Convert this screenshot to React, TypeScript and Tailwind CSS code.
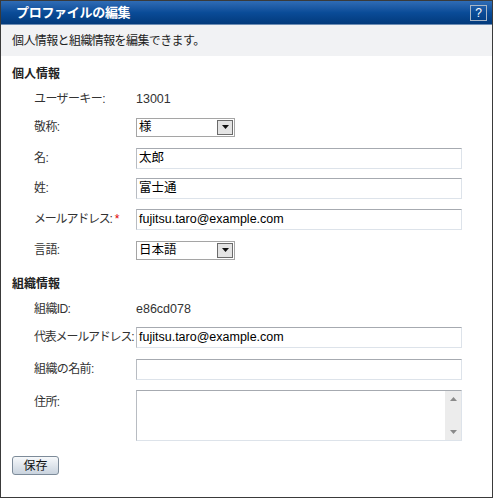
const jp = "font-['Liberation_Sans','Noto_Sans_CJK_JP',sans-serif]";

function Label({ text, required, tight }: { text: string; required?: boolean; tight?: boolean }) {
  return (
    <div
      className={`w-[102px] shrink-0 text-[12px] text-[#333] whitespace-nowrap ${
        tight ? "tracking-[-1.2px]" : "tracking-[-0.6px]"
      }`}
    >
      {text}
      {required && <span className="text-[#e00000] ml-[3px]">*</span>}
    </div>
  );
}

function TextBox({ value }: { value?: string }) {
  return (
    <div className="w-[326px] h-[21px] flex items-center px-[2px] bg-white border border-[#dde3ea] border-t-[#a6aab0] border-l-[#b8bcc2] text-[12.5px] text-black">
      {value}
    </div>
  );
}

function Select({ value }: { value: string }) {
  return (
    <div className="w-[99px] h-[19px] flex items-center justify-between border border-[#a5a5a5] bg-white pl-[2px] pr-[1px]">
      <span className="text-[12.5px] text-black">{value}</span>
      <div className="w-[16px] h-[15px] flex items-center justify-center bg-[#e4e4e4] border border-[#6b6b6b]">
        <svg width="7" height="4" viewBox="0 0 7 4">
          <path d="M0 0h7L3.5 4z" fill="#111" />
        </svg>
      </div>
    </div>
  );
}

export default function App() {
  return (
    <div className={`${jp} w-[494px] h-[499px] bg-white`}>
      <div className="w-[493px] h-[498px] border border-[#3a3a3a] flex flex-col">
        <div className="h-[24px] flex items-center justify-between pl-[15px] pr-[5px] bg-gradient-to-b from-[#2f6cb5] via-[#0a4c98] to-[#033a7c] border-b border-[#6d8db4]">
          <span className="text-white font-bold text-[13px] tracking-[-0.3px]">プロファイルの編集</span>
          <div className="w-[17px] h-[16px] border border-[#a9b6c6] flex items-center justify-center text-white text-[12px] leading-none">
            ?
          </div>
        </div>

        <div className="h-[31px] flex items-center pl-[11px] bg-[#f1f2f4] text-[12px] tracking-[-0.6px] text-[#222]">
          個人情報と組織情報を編集できます。
        </div>

        <div className="flex flex-col pl-[11px]">
          <div className="mt-[8px] h-[20px] flex items-center font-bold text-[12px] text-[#222]">個人情報</div>

          <div className="mt-[5px] h-[20px] flex items-center pl-[22px]">
            <Label text="ユーザーキー:" />
            <span className="text-[12.5px] text-[#333]">13001</span>
          </div>

          <div className="mt-[8px] h-[20px] flex items-center pl-[22px]">
            <Label text="敬称:" />
            <Select value="様" />
          </div>

          <div className="mt-[11px] h-[20px] flex items-center pl-[22px]">
            <Label text="名:" />
            <TextBox value="太郎" />
          </div>

          <div className="mt-[10px] h-[20px] flex items-center pl-[22px]">
            <Label text="姓:" />
            <TextBox value="富士通" />
          </div>

          <div className="mt-[11px] h-[20px] flex items-center pl-[22px]">
            <Label text="メールアドレス:" required tight />
            <TextBox value="fujitsu.taro@example.com" />
          </div>

          <div className="mt-[11px] h-[20px] flex items-center pl-[22px]">
            <Label text="言語:" />
            <Select value="日本語" />
          </div>

          <div className="mt-[14px] h-[20px] flex items-center font-bold text-[12px] text-[#222]">組織情報</div>

          <div className="mt-[5px] h-[20px] flex items-center pl-[22px]">
            <Label text="組織ID:" />
            <span className="text-[12.5px] text-[#333]">e86cd078</span>
          </div>

          <div className="mt-[8px] h-[20px] flex items-center pl-[22px]">
            <Label text="代表メールアドレス:" tight />
            <TextBox value="fujitsu.taro@example.com" />
          </div>

          <div className="mt-[12px] h-[20px] flex items-center pl-[22px]">
            <Label text="組織の名前:" />
            <TextBox />
          </div>

          <div className="mt-[11px] flex items-start pl-[22px]">
            <div className="pt-[3px]">
              <Label text="住所:" />
            </div>
            <div className="w-[326px] h-[51px] flex justify-end bg-white border border-[#dde3ea] border-t-[#a6aab0] border-l-[#b8bcc2]">
              <div className="w-[16px] h-full bg-[#ececec] flex flex-col items-center justify-between py-[6px]">
                <svg width="7" height="4" viewBox="0 0 7 4">
                  <path d="M3.5 0L7 4H0z" fill="#8a8a8a" />
                </svg>
                <svg width="7" height="4" viewBox="0 0 7 4">
                  <path d="M0 0h7L3.5 4z" fill="#8a8a8a" />
                </svg>
              </div>
            </div>
          </div>

          <div className="mt-[15px]">
            <button className="w-[47px] h-[19px] rounded-[3px] border border-[#7d8b99] bg-gradient-to-b from-[#f7f9fb] to-[#c9d3de] text-[12px] text-[#111] flex items-center justify-center">
              保存
            </button>
          </div>
        </div>
      </div>
    </div>
  );
}
